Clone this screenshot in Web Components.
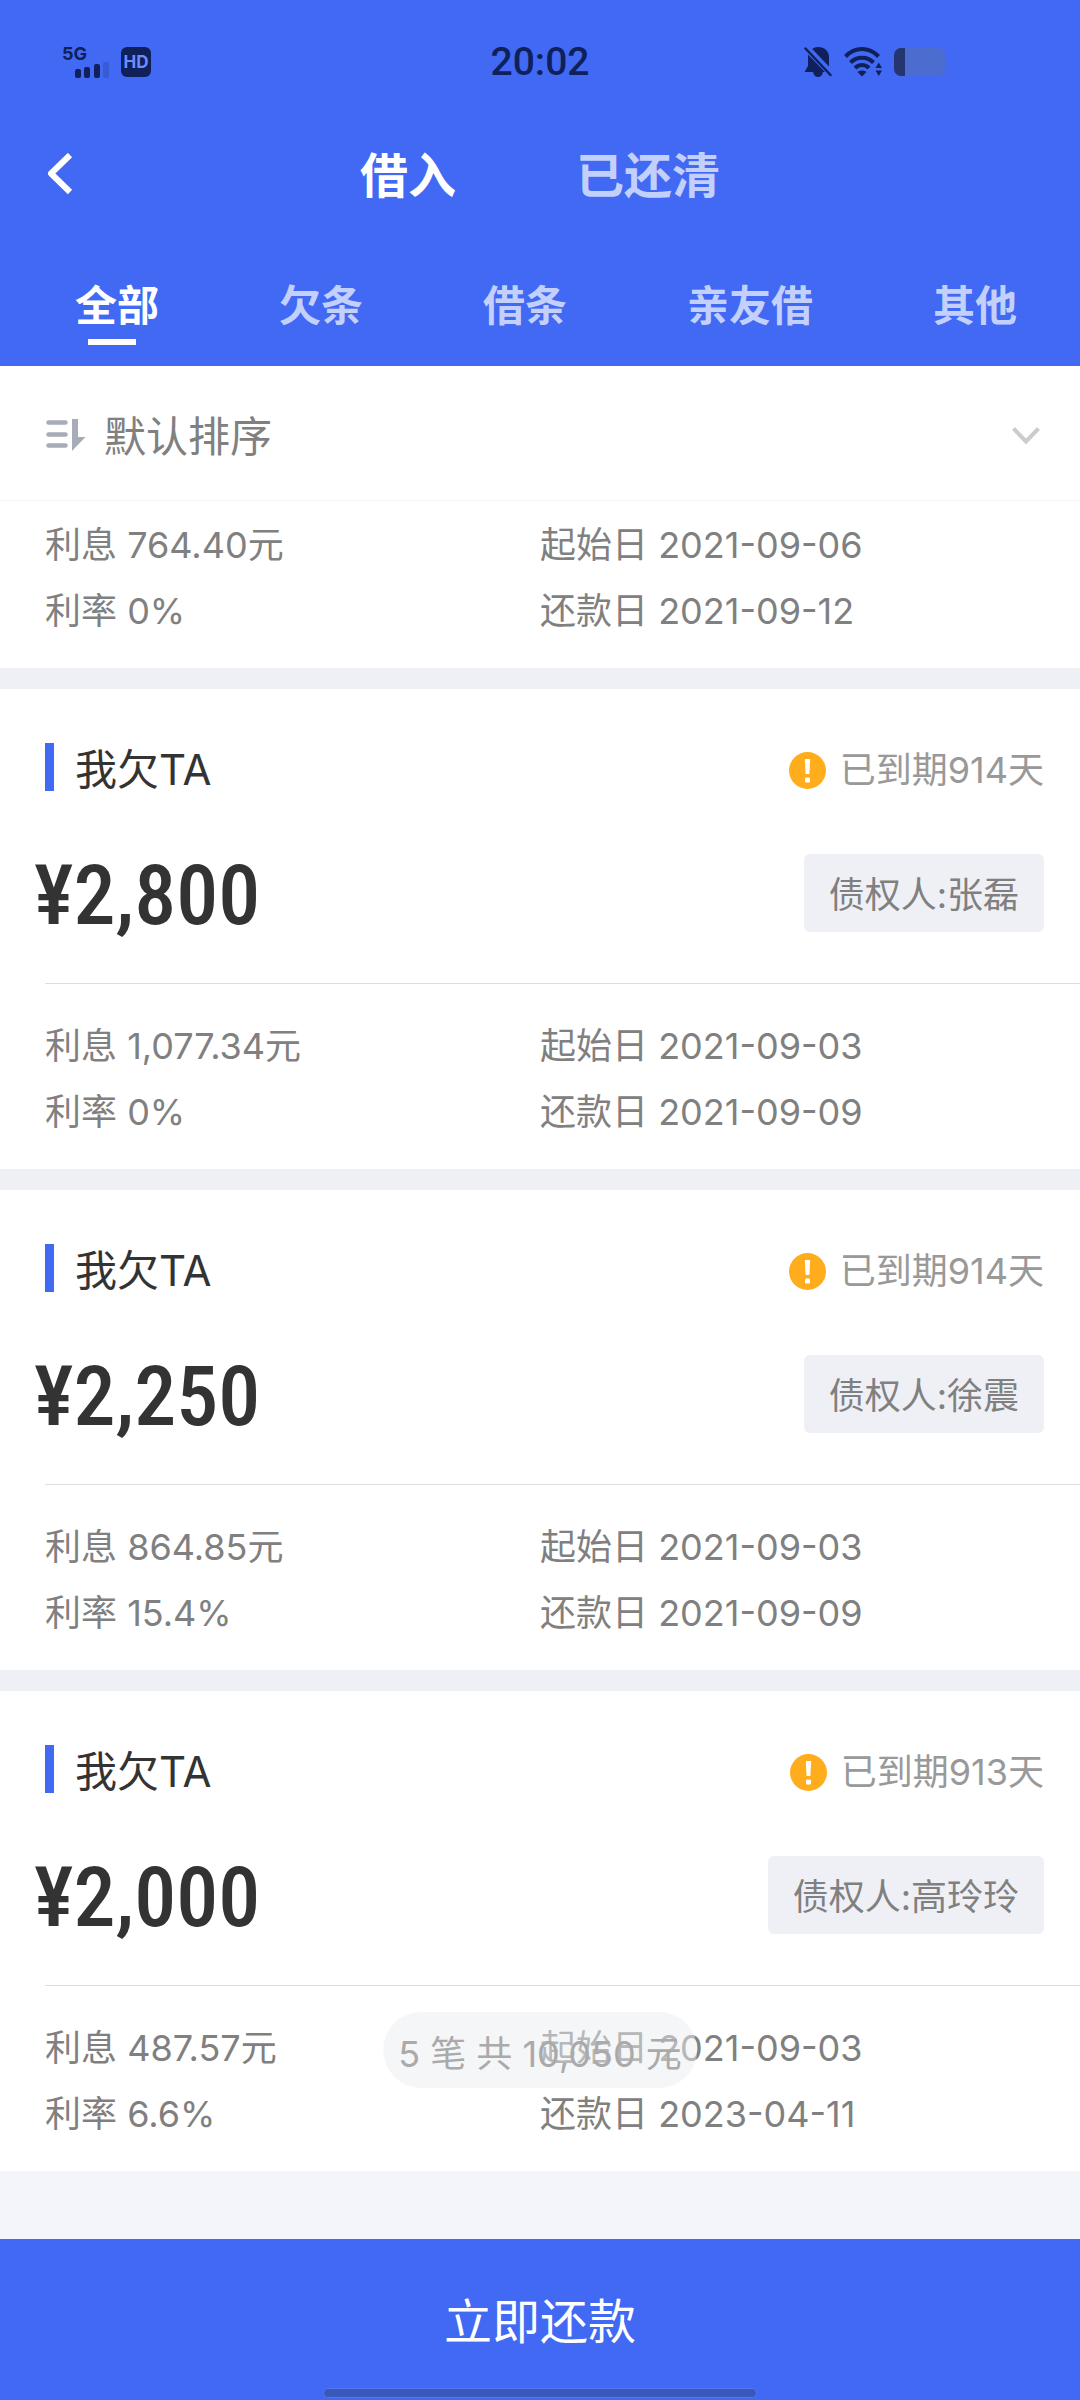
<!DOCTYPE html>
<html lang="zh-CN">
<head>
<meta charset="utf-8">
<meta name="viewport" content="width=device-width, initial-scale=1">
<title>借入</title>
<style>
  :root {
    --brand: #4169f4;
    --ink: #333333;
    --muted: #808080;
    --faint: #999999;
    --surface: #eff0f5;
    --edge: 45px;
    --edge-end: 36px;
  }
  html, body { margin: 0; }
  body { font-family: Inter, "Noto Sans CJK SC", sans-serif; font-size: 36px; color: var(--muted); }
</style>
</head>
<body>
<loan-page>
  <status-bar slot="header" time="20:02"></status-bar>
  <nav-bar slot="header"></nav-bar>
  <category-tabs slot="header"></category-tabs>
  <sort-bar></sort-bar>
  <loan-terms class="first" interest="764.40" rate="0" start="2021-09-06" due="2021-09-12"></loan-terms>
  <loan-card amount="¥2,800" overdue="914" creditor="张磊" interest="1,077.34" rate="0" start="2021-09-03" due="2021-09-09"></loan-card>
  <loan-card amount="¥2,250" overdue="914" creditor="徐震" interest="864.85" rate="15.4" start="2021-09-03" due="2021-09-09"></loan-card>
  <loan-card amount="¥2,000" overdue="913" creditor="高玲玲" interest="487.57" rate="6.6" start="2021-09-03" due="2023-04-11"></loan-card>
  <summary-toast slot="toast">5 笔 共 10,050 元</summary-toast>
  <repay-bar slot="footer">立即还款</repay-bar>
</loan-page>

<script>
const define = (name, render, setup) => customElements.define(name, class extends HTMLElement {
  connectedCallback() {
    if (this.shadowRoot) return;
    this.attachShadow({ mode: 'open' }).innerHTML = render(this);
    if (setup) setup(this.shadowRoot);
  }
});
const attr = (el, name) => el.getAttribute(name) || '';

const selectable = root => {
  const tabs = [...root.querySelectorAll('[role=tab]')];
  tabs.forEach(tab => tab.addEventListener('click', () =>
    tabs.forEach(t => t.setAttribute('aria-selected', String(t === tab)))));
};

define('loan-page', () => `
  <style>
    :host { display: flex; flex-direction: column; min-height: 100vh; background: #f4f5fa; }
    header { background: var(--brand); color: #fff; }
    main { display: block; position: relative; }
    footer { margin-top: auto; }
  </style>
  <header><slot name="header"></slot></header>
  <main><slot></slot><slot name="toast"></slot></main>
  <footer><slot name="footer"></slot></footer>`);

define('status-bar', el => `
  <style>
    :host { display: grid; grid-template-columns: 1fr auto 1fr; align-items: center; height: 124px;
            padding: 0 60px; color: #10205a; }
    .left, .right { display: flex; align-items: center; gap: 12px; }
    .right { justify-content: flex-end; padding-right: 75px; }
    time { font: 500 39px/48px Roboto, sans-serif; }
    svg { display: block; }
    text { font-family: Inter, sans-serif; font-weight: 700; }
  </style>
  <div class="left">
    <svg width="49" height="40" viewBox="0 0 49 40" fill="currentColor" role="img" aria-label="5G">
      <text x="2" y="18" font-size="18">5G</text>
      <rect x="15" y="27" width="6" height="9" rx="2"/>
      <rect x="24" y="25" width="6" height="11" rx="2"/>
      <rect x="34" y="22" width="6" height="14" rx="2"/>
      <rect x="43" y="20" width="6" height="16" rx="2" opacity=".2"/>
    </svg>
    <svg width="30" height="30" viewBox="0 0 30 30" role="img" aria-label="HD">
      <rect width="30" height="30" rx="6" fill="currentColor"/>
      <text x="15" y="21" font-size="17" text-anchor="middle" fill="#6d8dff">HD</text>
    </svg>
  </div>
  <time>${attr(el, 'time')}</time>
  <div class="right">
    <svg width="28" height="32" viewBox="0 0 28 32" fill="currentColor" aria-hidden="true">
      <path d="M14 1c-2.400 0-4.300.8-5.800 2L25 20.500V11C25 5 20.500 1 14 1zM4 8.500V20l-3.500 6H9c.5 3 2.500 5 5 5s4.500-2 5-5h2z"/>
      <path d="M1.500 2.500 26.500 29" fill="none" stroke="currentColor" stroke-width="2.500" stroke-linecap="round"/>
    </svg>
    <svg width="38" height="30" viewBox="0 0 38 30" aria-hidden="true">
      <g fill="none" stroke="currentColor" stroke-width="4">
        <path d="M1.500 9.500C11-.5 25-.5 34.500 9.500"/>
        <path d="M6.500 15.500c6.500-6.500 16.500-6.500 23 0"/>
        <path d="M11 21c4-4 10-4 14 0"/>
      </g>
      <path d="M18 29.500l-4.500-4.500c2.500-2 6.500-2 9 0zM31.500 21h6.500L34.800 15.500zM31.500 23.500h6.500L34.800 29z" fill="currentColor"/>
    </svg>
    <svg width="51" height="28" viewBox="0 0 51 28" aria-hidden="true">
      <path d="M11 0h33a7 7 0 0 1 7 7v14a7 7 0 0 1-7 7H11z" fill="#4c6ccf"/>
      <path d="M7 0h4v28H7a7 7 0 0 1-7-7V7a7 7 0 0 1 7-7z" fill="#24356f"/>
    </svg>
  </div>`);

define('nav-bar', () => `
  <style>
    :host { display: grid; grid-template-columns: 1fr auto 1fr; align-items: center; height: 104px; padding: 0 var(--edge); }
    button { border: 0; padding: 0; background: none; font: inherit; color: inherit; text-align: left; cursor: pointer; }
    svg { display: block; }
    .titles { display: flex; gap: 120px; }
    .titles button { font-size: 48px; line-height: 60px; font-weight: 700; color: rgba(255,255,255,.7); }
    .titles button[aria-selected=true] { color: #fff; }
  </style>
  <button aria-label="返回">
    <svg width="30" height="46" viewBox="0 0 30 46" fill="none" stroke="#fff" stroke-width="6" stroke-linejoin="round"><path d="M25 2 6 20.500 25 39"/></svg>
  </button>
  <div class="titles" role="tablist">
    <button role="tab" aria-selected="true">借入</button>
    <button role="tab" aria-selected="false">已还清</button>
  </div>`, selectable);

define('category-tabs', () => `
  <style>
    :host { display: block; padding: 48px 63px 21px 75px; }
    div { display: flex; justify-content: space-between; }
    button { border: 0; padding: 0; background: none; font: inherit; font-size: 42px; line-height: 60px; font-weight: 700;
             color: rgba(255,255,255,.7); cursor: pointer; }
    button::after { content: ""; display: block; width: 48px; height: 6px; margin: 3px 0 0 13px; }
    button[aria-selected=true] { color: #fff; }
    button[aria-selected=true]::after { background: #fff; }
  </style>
  <div role="tablist">
    ${['全部', '欠条', '借条', '亲友借', '其他'].map((t, i) => `<button role="tab" aria-selected="${i === 0}">${t}</button>`).join('')}
  </div>`, selectable);

define('sort-bar', () => `
  <style>
    :host { display: flex; align-items: center; padding: 41px 40px 33px var(--edge);
            background: #fff; border-bottom: 1px solid #f4f4f4; }
    svg { display: block; flex: none; }
    label { display: flex; margin-right: 18px; }
    select { flex: 1; appearance: none; border: 0; padding: 0; margin: 0; background: none; font: inherit;
             font-size: 42px; line-height: 60px; height: 60px; color: inherit; outline: 0; }
  </style>
  <label for="sort" aria-label="排序方式">
    <svg width="41" height="38" viewBox="0 0 41 38" aria-hidden="true">
      <path d="M3.500 4.500h17M3.500 16.500h17M3.500 27.500h17" stroke="#a6acb8" stroke-width="4.500" stroke-linecap="round"/>
      <path d="M27 1h6v18h7.500L27 33z" fill="#a6acb8"/>
    </svg>
  </label>
  <select id="sort"><option>默认排序</option></select>
  <svg width="28" height="20" viewBox="0 0 28 20" fill="none" stroke="#cccccc" stroke-width="4" aria-hidden="true"><path d="M1.500 1.500 14 14.500 26.500 1.500"/></svg>`);

define('loan-terms', el => `
  <style>
    :host { display: grid; grid-template-columns: 1fr 1fr; padding: 29px 0 24px; background: #fff; line-height: 66px; }
    :host(.first) { padding-top: 11px; }
    .l { padding-left: var(--edge); }
  </style>
  <div class="l">利息 ${attr(el, 'interest')}元</div>
  <div>起始日 ${attr(el, 'start')}</div>
  <div class="l">利率 ${attr(el, 'rate')}%</div>
  <div>还款日 ${attr(el, 'due')}</div>`);

define('loan-card', el => `
  <style>
    :host { display: block; border-top: 21px solid var(--surface); background: #fff; }
    .row { display: flex; align-items: center; justify-content: space-between; padding-right: var(--edge-end); }
    .head { padding-top: 54px; padding-left: var(--edge); line-height: 54px; }
    h2 { display: flex; align-items: flex-start; gap: 21px; margin: 0; font-size: 42px; font-weight: 400; color: var(--ink); }
    h2::before { content: ""; width: 9px; height: 48px; background: var(--brand); }
    .due { display: flex; align-items: center; gap: 14px; color: var(--faint); }
    svg { display: block; }
    .sum { padding-top: 57px; padding-bottom: 51px; padding-left: 34px; }
    .amount { padding-top: 6px; font: 500 84px/72px "Roboto Condensed", sans-serif; color: var(--ink); }
    .creditor { padding: 11px 25px 7px; line-height: 60px; border-radius: 6px; background: var(--surface); }
    hr { margin: 0 0 0 var(--edge); border: 0; height: 1px; background: #dddddd; }
  </style>
  <div class="row head">
    <h2>我欠TA</h2>
    <div class="due">
      <svg width="37" height="37" viewBox="0 0 37 37" aria-hidden="true">
        <circle cx="18.500" cy="18.500" r="18.500" fill="#ffad1c"/>
        <path d="M15.800 7h5.400l-.8 15h-3.800z" fill="#fff"/><rect x="16" y="25.500" width="5" height="5" rx="1" fill="#fff"/>
      </svg>
      <span>已到期${attr(el, 'overdue')}天</span>
    </div>
  </div>
  <div class="row sum">
    <div class="amount">${attr(el, 'amount')}</div>
    <div class="creditor">债权人:${attr(el, 'creditor')}</div>
  </div>
  <hr>
  <loan-terms interest="${attr(el, 'interest')}" rate="${attr(el, 'rate')}" start="${attr(el, 'start')}" due="${attr(el, 'due')}"></loan-terms>`);

define('summary-toast', () => `
  <style>
    :host { position: absolute; left: 50%; bottom: 83px; transform: translateX(-50%); padding: 12px 15px 4px; line-height: 60px;
            white-space: nowrap; border-radius: 38px; background: rgba(235,237,241,.5); color: #aaaaaa; }
  </style>
  <slot></slot>`);

define('repay-bar', () => `
  <style>
    :host { display: block; position: relative; background: var(--brand); }
    button { display: block; width: 100%; border: 0; padding: 53px 0 48px; background: none; color: #fff;
             font: inherit; font-size: 48px; line-height: 60px; cursor: pointer; }
    i { position: absolute; left: 30%; right: 30%; bottom: 3px; height: 8px; border-radius: 4px; background: #3a59bb;
        box-shadow: 0 0 0 1px #5276f3; }
  </style>
  <button><slot></slot></button><i></i>`);
</script>
</body>
</html>
